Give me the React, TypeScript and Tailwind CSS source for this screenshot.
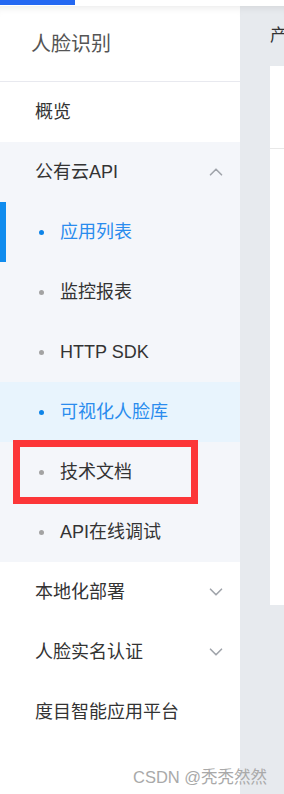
import { ChevronDown, ChevronUp } from "lucide-react";

const font = { fontFamily: '"Liberation Sans", "Noto Sans CJK SC", sans-serif' };

const subItems = [
  { label: "应用列表", active: true, bar: true },
  { label: "监控报表" },
  { label: "HTTP SDK" },
  { label: "可视化人脸库", active: true, hl: true },
  { label: "技术文档", boxed: true },
  { label: "API在线调试" },
];

export default function App() {
  return (
    <div
      className="relative flex flex-col w-[284px] h-[794px] overflow-hidden bg-white"
      style={font}
    >
      {/* top strip */}
      <div className="h-[6px] bg-white shrink-0">
        <div className="w-[75px] h-[5px] bg-[#2468f2]" />
      </div>

      <div className="flex flex-1 min-h-0">
        {/* sidebar */}
        <aside className="w-[240px] shrink-0 flex flex-col bg-white shadow-[inset_0_8px_10px_-8px_rgba(0,0,0,0.12)]">
          <div className="h-[76px] flex items-center pl-[31px] border-b border-[#e8e9ef] text-[20px] text-[#555]">
            人脸识别
          </div>
          <div className="h-[60px] flex items-center pl-[35px] text-[18px] text-[#333]">
            概览
          </div>

          <div className="bg-[#f4f6fa]">
            <div className="h-[60px] flex items-center justify-between pl-[35px] pr-[13px] text-[18px] text-[#333]">
              <span>公有云API</span>
              <ChevronUp size={22} strokeWidth={1.8} className="text-[#a0a4ab]" />
            </div>
            {subItems.map((it) => (
              <div
                key={it.label}
                className={`relative h-[60px] flex items-center text-[18px] ${
                  it.hl ? "bg-[#e8f4fd]" : ""
                } ${it.active ? "text-[#2a8cee]" : "text-[#333]"}`}
              >
                {it.bar && (
                  <div className="absolute left-0 top-0 w-[6px] h-[60px] bg-[#108cee]" />
                )}
                <span
                  className={`ml-[39px] w-[5px] h-[5px] rounded-full ${
                    it.active ? "bg-[#0e84e8]" : "bg-[#a3a3a3]"
                  }`}
                />
                <span className="ml-[16px]">{it.label}</span>
                {it.boxed && (
                  <div className="absolute left-[13px] top-[-2px] w-[185px] h-[64px] border-[7px] border-[#fc3638]" />
                )}
              </div>
            ))}
          </div>

          <div className="h-[60px] flex items-center justify-between pl-[35px] pr-[13px] text-[18px] text-[#333]">
            <span>本地化部署</span>
            <ChevronDown size={22} strokeWidth={1.8} className="text-[#a0a4ab]" />
          </div>
          <div className="h-[60px] flex items-center justify-between pl-[35px] pr-[13px] text-[18px] text-[#333]">
            <span>人脸实名认证</span>
            <ChevronDown size={22} strokeWidth={1.8} className="text-[#a0a4ab]" />
          </div>
          <div className="h-[60px] flex items-center pl-[35px] text-[18px] text-[#333]">
            度目智能应用平台
          </div>
        </aside>

        {/* main */}
        <main className="flex-1 min-w-0 overflow-hidden flex flex-col bg-[#e7eaee] pl-[30px] shadow-[inset_0_8px_10px_-8px_rgba(0,0,0,0.12)]">
          <div className="h-[60px] flex items-center text-[17px] text-[#333] whitespace-nowrap">
            产品服务
          </div>
          <div className="h-[539px] bg-white flex flex-col">
            <div className="h-[83px] border-b border-[#e8e8e8]" />
          </div>
        </main>
      </div>

      {/* watermark */}
      <div className="absolute left-[133px] top-[765px] text-[16.5px] text-[#a9a9a9] whitespace-nowrap">
        CSDN @秃秃然然
      </div>
    </div>
  );
}
